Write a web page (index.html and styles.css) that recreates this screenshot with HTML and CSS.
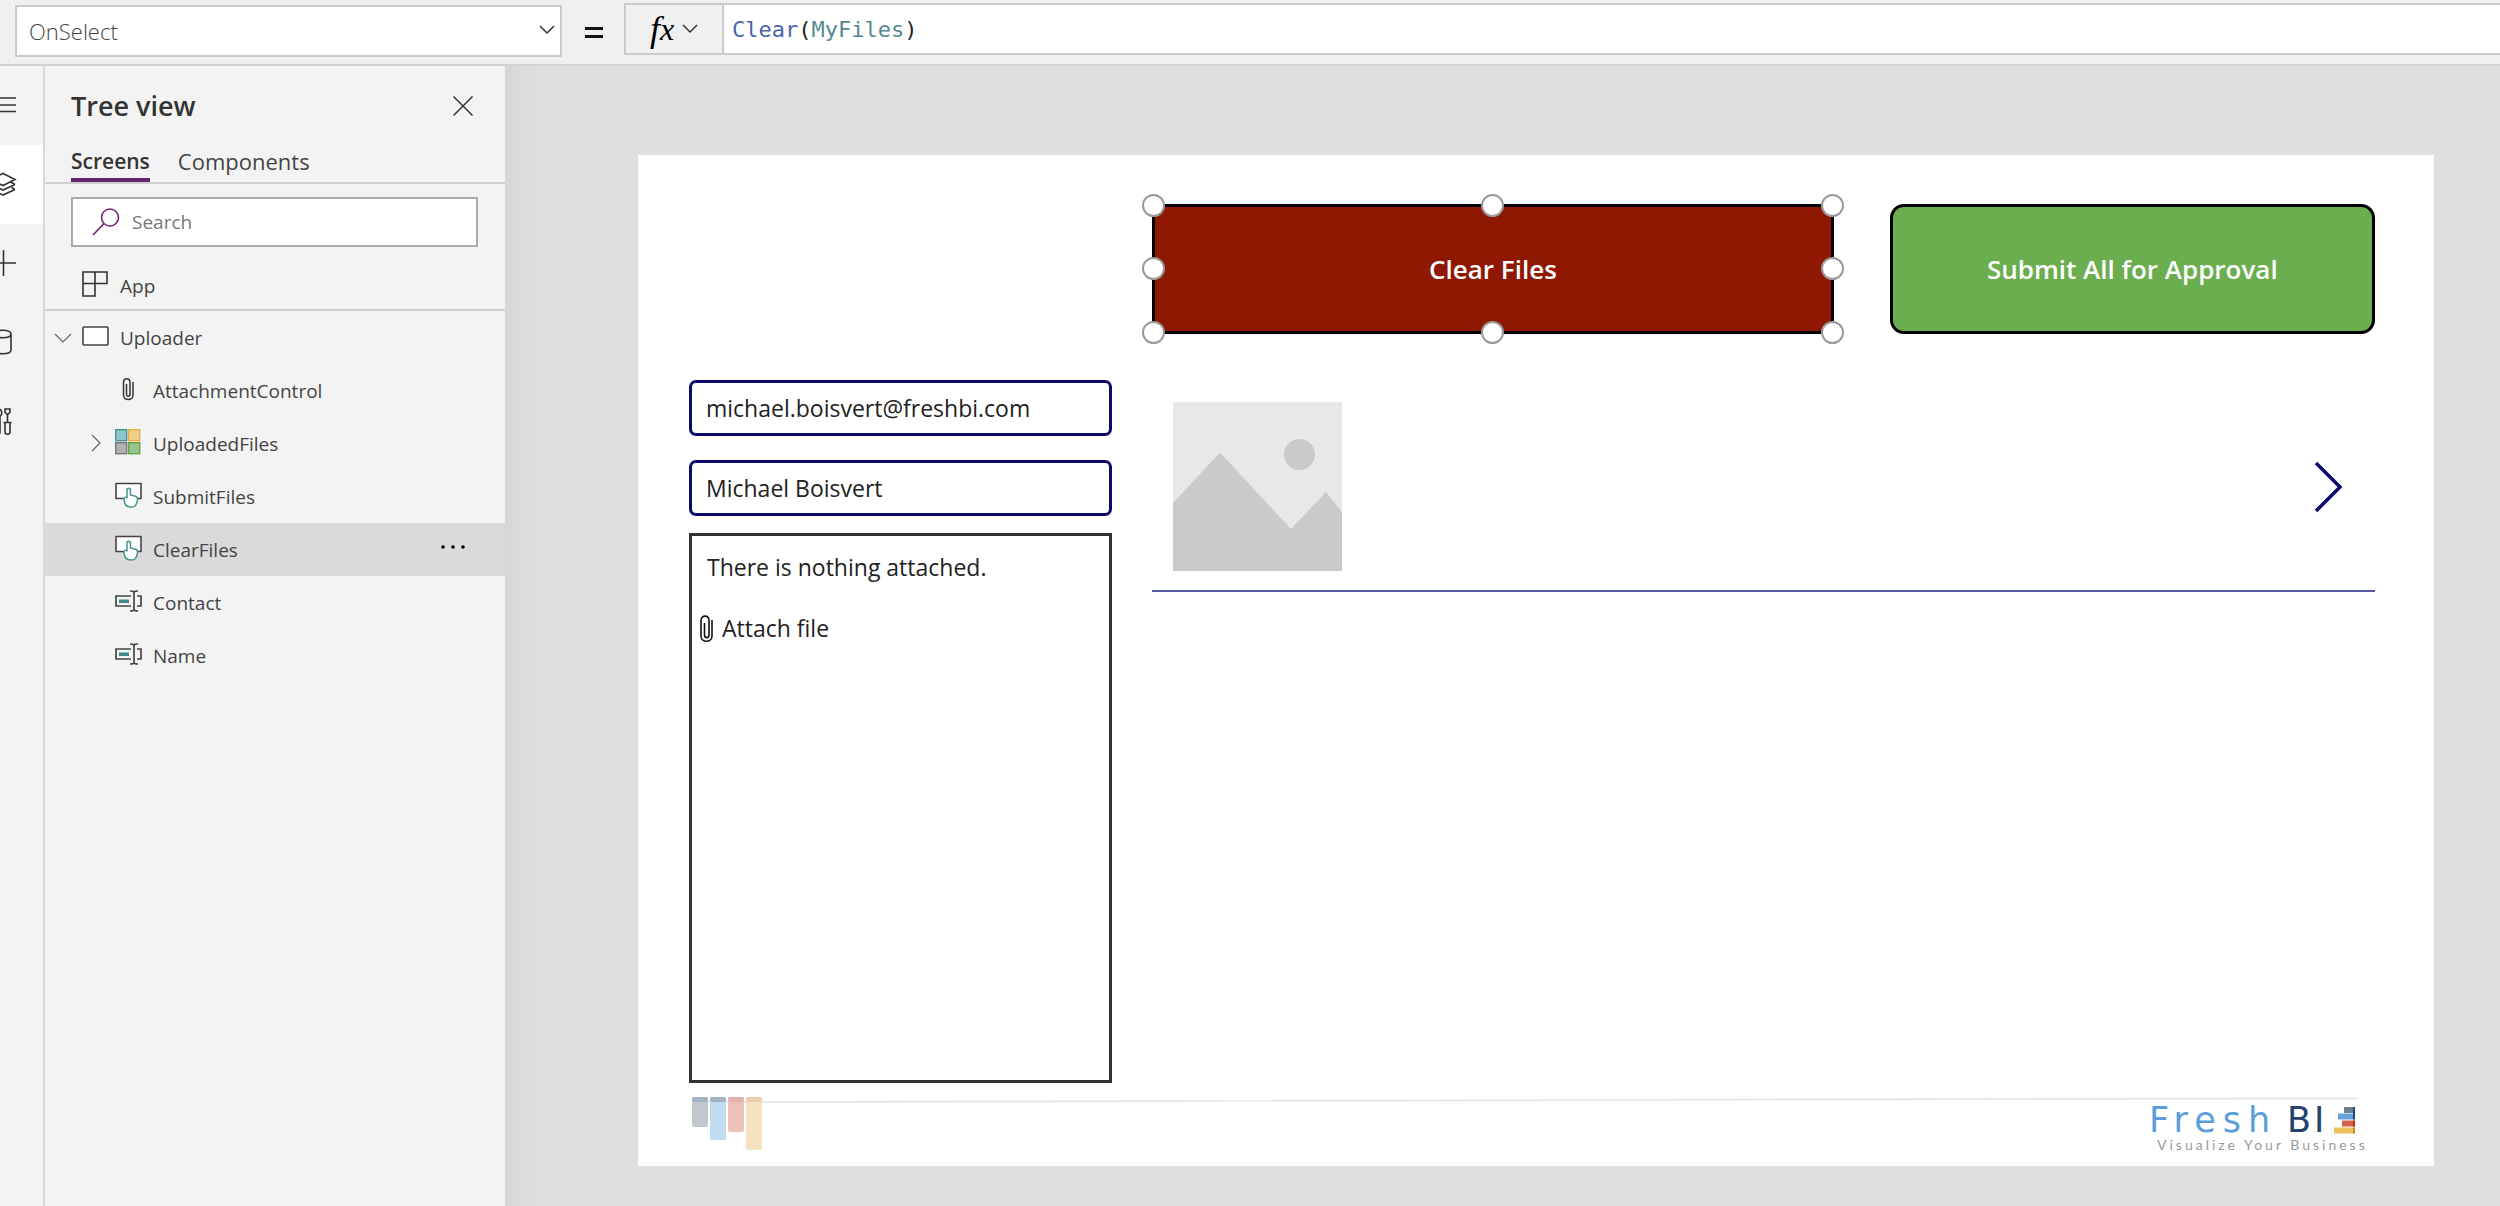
FILE: index.html
```html
<!DOCTYPE html>
<html lang="en">
<head>
<meta charset="utf-8">
<title>Uploader - App editor</title>
<link rel="stylesheet" href="styles.css">
</head>
<body>
<header class="formula-bar">
  <div class="property">
    <select class="property-select" aria-label="Property"><option>OnSelect</option></select>
    <svg class="property-chevron" width="16" height="10" viewBox="0 0 16 10"><path d="M1 1l7 7 7-7" fill="none" stroke="#333" stroke-width="1.5"/></svg>
  </div>
  <span class="equals">
    <svg width="18" height="12" viewBox="0 0 18 12"><path d="M0 1.5h18M0 9.5h18" stroke="#111" stroke-width="3"/></svg>
  </span>
  <div class="formula">
    <button class="fx" type="button" aria-label="Functions"><span class="fx-f">f</span><span class="fx-x">x</span>
      <svg class="fx-chevron" width="16" height="10" viewBox="0 0 16 10"><path d="M1 1l7 7 7-7" fill="none" stroke="#333" stroke-width="1.5"/></svg>
    </button>
    <div class="formula-text" contenteditable="true" role="textbox" aria-label="Formula" spellcheck="false"><span class="fn">Clear</span>(<span class="ident">MyFiles</span>)</div>
  </div>
</header>

<div class="workspace">
  <nav class="rail" aria-label="Panels">
    <button class="rail-item" type="button" aria-label="Menu"><svg width="20" height="32" viewBox="0 0 20 32"><path d="M0 9h16M0 16h16M0 22.500h16" stroke="#333" stroke-width="1.700"/></svg></button>
    <button class="rail-item rail-item-active" type="button" aria-label="Tree view"><svg width="20" height="32" viewBox="0 0 20 32"><path d="M-10 11.500L3 5.500l12 6-12 6zM15 16.500l-12 5.500-12-5.500 3-2M15 16.500l-3.500-2M15 21.500l-12 5.500-12-5.500 3-2M15 21.500l-3.500-2" fill="none" stroke="#333" stroke-width="1.600"/></svg></button>
    <button class="rail-item" type="button" aria-label="Insert"><svg width="20" height="32" viewBox="0 0 20 32"><path d="M0 16h16M3.500 3v26" stroke="#333" stroke-width="1.600"/></svg></button>
    <button class="rail-item" type="button" aria-label="Data"><svg width="20" height="32" viewBox="0 0 20 32"><path d="M-6 8v16c0 5 17 5 17 0V8M-6 8c0 5 17 5 17 0s-17-5-17 0z" fill="none" stroke="#333" stroke-width="1.600"/></svg></button>
    <button class="rail-item" type="button" aria-label="Tools"><svg width="20" height="32" viewBox="0 0 20 32"><g fill="none" stroke="#333" stroke-width="1.600"><path d="M-2 4c4 0 5 5 2 7v17h-3"/><path d="M5 4h5v3l-1.500 2h-2L5 7zM7.500 9v8M3.500 17.500h8M5 18v9c0 3 5 3 5 0v-9"/></g></svg></button>
  </nav>

  <aside class="tree">
    <div class="tree-head">
      <h1 class="tree-title">Tree view</h1>
      <button class="icon-button" type="button" aria-label="Close"><svg width="20" height="20" viewBox="0 0 20 20"><path d="M.5.5l19 19M19.500.5l-19 19" stroke="#333" stroke-width="1.500"/></svg></button>
    </div>
    <div class="tabs" role="tablist">
      <button class="tab tab-active" type="button" role="tab" aria-selected="true">Screens</button>
      <button class="tab" type="button" role="tab" aria-selected="false">Components</button>
    </div>
    <label class="search">
      <svg width="28" height="28" viewBox="0 0 28 28"><circle cx="18" cy="9.500" r="8.500" fill="none" stroke="#742774" stroke-width="1.600"/><path d="M12 15.500L1 27" stroke="#742774" stroke-width="1.800"/></svg>
      <input class="search-input" type="search" placeholder="Search" aria-label="Search">
    </label>
    <ul class="items">
      <li class="item item-top item-app">
        <span class="item-icon"><svg width="26" height="26" viewBox="0 0 26 26"><path d="M1 1h24v11.500H13V25H1zM13 1v11.500M1 12.500h12" fill="none" stroke="#333" stroke-width="1.600"/></svg></span>App
      </li>
      <li class="item item-top">
        <svg class="twisty" width="18" height="10" viewBox="0 0 18 10"><path d="M1 1l8 8 8-8" fill="none" stroke="#666" stroke-width="1.200"/></svg>
        <span class="item-icon"><svg width="27" height="20" viewBox="0 0 27 20"><rect x="1" y="1" width="25" height="18" rx="1" fill="#fff" stroke="#444" stroke-width="1.600"/></svg></span>Uploader
      </li>
      <li class="item">
        <span class="item-icon"><svg width="26" height="24" viewBox="0 0 26 24"><path d="M18 5v13c0 6-9.500 6-9.500 0V5.500c0-5 6.500-5 6.500 0V17c0 3-3.500 3-3.500 0V7" fill="none" stroke="#333" stroke-width="1.500"/></svg></span>AttachmentControl
      </li>
      <li class="item">
        <svg class="twisty" width="10" height="18" viewBox="0 0 10 18"><path d="M1 1l8 8-8 8" fill="none" stroke="#666" stroke-width="1.200"/></svg>
        <span class="item-icon"><svg width="26" height="26" viewBox="0 0 26 26"><g stroke-width="1.400"><rect x=".7" y=".7" width="11" height="11" fill="#8bc8cb" stroke="#4f8f92"/><rect x="13.700" y=".7" width="11" height="11" fill="#efcf8a" stroke="#e8b04a"/><rect x=".7" y="13.700" width="11" height="11" fill="#b1b1b1" stroke="#777"/><rect x="13.700" y="13.700" width="11" height="11" fill="#9ac48b" stroke="#64a24b"/></g></svg></span>UploadedFiles
      </li>
      <li class="item">
        <span class="item-icon"><svg width="27" height="26" viewBox="0 0 27 26"><use href="#tap"/></svg></span>SubmitFiles
      </li>
      <li class="item item-selected">
        <span class="item-icon"><svg width="27" height="26" viewBox="0 0 27 26"><use href="#tap"/></svg></span>ClearFiles
        <button class="icon-button more" type="button" aria-label="More"><svg width="24" height="4" viewBox="0 0 24 4"><circle cx="2" cy="2" r="1.800"/><circle cx="12" cy="2" r="1.800"/><circle cx="22" cy="2" r="1.800"/></svg></button>
      </li>
      <li class="item">
        <span class="item-icon"><svg width="27" height="22" viewBox="0 0 27 22"><use href="#field"/></svg></span>Contact
      </li>
      <li class="item">
        <span class="item-icon"><svg width="27" height="22" viewBox="0 0 27 22"><use href="#field"/></svg></span>Name
      </li>
    </ul>
  </aside>

  <main class="stage">
    <div class="screen">
      <div class="actions">
        <div class="selection">
          <button class="action action-clear" type="button">Clear Files</button>
          <i class="handle h-top h-left"></i><i class="handle h-top h-center"></i><i class="handle h-top h-right"></i>
          <i class="handle h-middle h-left"></i><i class="handle h-middle h-right"></i>
          <i class="handle h-bottom h-left"></i><i class="handle h-bottom h-center"></i><i class="handle h-bottom h-right"></i>
        </div>
        <button class="action action-submit" type="button">Submit All for Approval</button>
      </div>
      <form class="details">
        <input class="field" type="text" aria-label="Contact" value="michael.boisvert@freshbi.com">
        <input class="field" type="text" aria-label="Name" value="Michael Boisvert">
        <div class="attachments">
          <p class="attachments-empty">There is nothing attached.</p>
          <button class="attach" type="button"><svg width="13" height="28" viewBox="0 0 13 28"><path d="M12 5v16c0 7-11 7-11 0V6c0-6.500 8-6.500 8 0v14c0 3.500-4.500 3.500-4.500 0V8" fill="none" stroke="#111" stroke-width="1.600"/></svg>Attach file</button>
        </div>
      </form>
      <section class="gallery">
        <svg width="169" height="169" viewBox="0 0 169 169" role="img" aria-label="File preview"><rect width="169" height="169" fill="#e8e8e8"/><path d="M0 101L47 50.500l71 76.500 35-37 16 20v59H0z" fill="#cacac8"/><circle cx="126.500" cy="52.500" r="15.500" fill="#cacac8"/></svg>
        <button class="icon-button" type="button" aria-label="Open file"><svg width="28" height="54" viewBox="0 0 28 54"><path d="M2 3l24 24L2 51" fill="none" stroke="#0b0b6b" stroke-width="3.500"/></svg></button>
      </section>
      <footer class="brand">
        <svg class="brand-line" viewBox="0 0 1664 6" preserveAspectRatio="none"><path d="M0 5L300 4.500 1300 2 1664 1.500" fill="none" stroke="#e3e3e3" stroke-width="1.500"/></svg>
        <svg class="brand-bars" width="72" height="54" viewBox="0 0 72 54"><rect x="0" y="0" width="16" height="30" rx="2" fill="#c0c7cf"/><rect x="18" y="0" width="16" height="43" rx="2" fill="#c1dcf0"/><rect x="36" y="0" width="16" height="35" rx="2" fill="#ecc2bb"/><rect x="54" y="0" width="16" height="53" rx="2" fill="#f6e2c0"/><rect x="0" y="0" width="16" height="5" rx="2" fill="#a3b2c5"/><rect x="18" y="0" width="16" height="5" rx="2" fill="#a5b1c4"/><rect x="36" y="0" width="16" height="5" rx="2" fill="#e1b3ab"/><rect x="54" y="0" width="16" height="5" rx="2" fill="#e9cdb0"/></svg>
        <div class="logo">
          <div class="logo-name"><span class="logo-fresh">Fresh</span><span class="logo-bi">BI</span>
            <svg width="22" height="28" viewBox="0 0 22 28"><path fill="#6f7f8c" d="M10 1h11v6H10z"/><path fill="#66a3de" d="M4 7.500h17v6H4z"/><path fill="#d5614c" d="M8 14.500h13v6H8z"/><path fill="#efbf5c" d="M0 21.500h21v6H0z"/><path fill="#24426b" d="M19 1h2v12.500h-2z"/><path fill="#b8331f" d="M19 14.500h2v6h-2z"/><path fill="#d18a2c" d="M19 21.500h2v6h-2z"/></svg>
          </div>
          <div class="logo-tagline">Visualize Your Business</div>
        </div>
      </footer>
    </div>
  </main>
</div>

<svg class="symbols" aria-hidden="true">
  <symbol id="tap" viewBox="0 0 27 26"><path d="M1 1.500h25v15H1z" fill="#fff" stroke="#444" stroke-width="1.600" stroke-linejoin="round"/><path d="M12 16.500V8c0-2.500 3.500-2.500 3.500 0v5l5 1.200c2 .5 2.200 1.300 2 3.300-.3 4.500-2.500 7.500-6.500 7.500-5 0-7-3.500-7-8 0-2 1.500-2 3-1" fill="#fff" stroke="#4a9490" stroke-width="1.500"/></symbol>
  <symbol id="field" viewBox="0 0 27 22"><path d="M16 6H1v10h15M22 6h4v10h-4" fill="none" stroke="#444" stroke-width="1.700"/><path d="M4 9.500h10v3.500H4z" fill="#3f8c87"/><path d="M19 2v18M15 1c2.500 0 4 .4 4 1.500C19 1.400 20.500 1 23 1M15 21c2.500 0 4-.4 4-1.500 0 1.100 1.500 1.500 4 1.500" fill="none" stroke="#444" stroke-width="1.700"/></symbol>
</svg>
</body>
</html>
```
FILE: styles.css
```css
* { box-sizing: border-box; }

body {
  margin: 0;
  min-height: 100vh;
  display: flex;
  flex-direction: column;
  background: #dfdfdf;
  color: #444;
  font-family: "Open Sans", "Noto Sans", sans-serif;
  font-size: 19px;
}

button, input, select { font: inherit; color: inherit; }
button { margin: 0; padding: 0; border: 0; background: none; }
svg { display: block; flex: none; }
.symbols { position: absolute; width: 0; height: 0; }
.icon-button { display: flex; }

/* Formula bar */
.formula-bar {
  display: flex;
  align-items: flex-start;
  height: 66px;
  padding: 3px 0 0 15px;
  background: #f0f0f0;
  border-bottom: 2px solid #d2d2d2;
}
.property { position: relative; width: 547px; padding-top: 2px; }
.property-select {
  display: block;
  width: 100%;
  height: 52px;
  padding: 0 12px;
  appearance: none;
  border: 2px solid #cbcbcb;
  border-radius: 0;
  background: #fff;
  color: #444;
  font-size: 22px;
  font-weight: 300;
}
.property-chevron { position: absolute; right: 7px; top: 22px; pointer-events: none; }
.equals { width: 62px; padding: 24px 0 0 23px; }
.formula {
  flex: 1;
  display: flex;
  height: 52px;
  border: 2px solid #cbcbcb;
  border-right: 0;
}
.fx {
  display: flex;
  align-items: center;
  width: 98px;
  padding-left: 24px;
  border-right: 2px solid #cbcbcb;
  color: #000;
  font-family: "Liberation Serif", serif;
  font-style: italic;
  line-height: 40px;
}
.fx-f { font-size: 36px; }
.fx-x { font-size: 32px; }
.fx-chevron { margin-left: 8px; }
.formula-text {
  flex: 1;
  padding-left: 8px;
  background: #fff;
  color: #222;
  font-family: "DejaVu Sans Mono", monospace;
  font-size: 22px;
  line-height: 50px;
}
.fn { color: #4a64ad; }
.ident { color: #528a91; }

.workspace { flex: 1; display: flex; }

/* Icon rail */
.rail {
  width: 45px;
  background: #f3f3f3;
  border-right: 2px solid #d8d8d8;
}
.rail-item { display: flex; align-items: center; width: 100%; height: 79px; padding-bottom: 2px; }
.rail-item-active { background: #fff; }

/* Tree view */
.tree { width: 460px; background: #f3f3f3; }
.tree-head {
  display: flex;
  justify-content: space-between;
  align-items: center;
  height: 78px;
  padding: 2px 32px 0 26px;
}
.tree-title { margin: 0; font-size: 27px; line-height: 40px; font-weight: 600; color: #333; }
.tabs {
  display: flex;
  gap: 28px;
  height: 40px;
  padding-left: 26px;
  border-bottom: 2px solid #d2d2d2;
}
.tab { display: flex; height: 38px; font-size: 22px; line-height: 34px; }
.tab-active { border-bottom: 4px solid #66266b; font-size: 21px; font-weight: 600; color: #333; }
.search {
  display: flex;
  align-items: center;
  gap: 12px;
  height: 50px;
  margin: 13px 27px 0 26px;
  padding-left: 19px;
  background: #fff;
  border: 2px solid #a9aaaa;
}
.search-input { flex: 1; min-width: 0; padding: 0; border: 0; outline: 0; background: none; }
.search-input::placeholder { color: #777; opacity: 1; }
.items { margin: 0; padding: 11px 0 0; list-style: none; }
.item {
  position: relative;
  display: flex;
  align-items: center;
  gap: 11px;
  height: 53px;
  padding: 1px 40px 0 70px;
}
.item-top { padding-left: 37px; }
.item-app { padding-top: 5px; border-bottom: 2px solid #cfcfcf; }
.item-icon { width: 27px; padding-bottom: 4px; }
.item-selected { background: #dadada; }
.twisty { position: absolute; left: 9px; top: 22px; }
.item:not(.item-top) .twisty { left: 46px; top: 17px; }
.more { margin-left: auto; padding-bottom: 6px; }

/* Stage */
.stage {
  flex: 1;
  min-width: 0;
  padding: 89px 66px 40px 133px;
  background: linear-gradient(to right, #d6d6d6, #dfdfdf 32px);
}
.screen {
  display: grid;
  grid-template-columns: minmax(0, 423fr) minmax(0, 1222fr);
  grid-template-rows: 130px auto 83px;
  column-gap: 40px;
  padding: 49px 59px 0 51px;
  background: #fff;
}
.actions {
  grid-column: 2;
  display: grid;
  grid-template-columns: 681fr 485fr;
  gap: 56px;
}
.selection { position: relative; display: flex; }
.action { border: 3px solid #000; color: #fff; font-size: 26px; font-weight: 600; }
.action-clear { flex: 1; background: #8f1802; }
.action-submit { border-radius: 14px; background: #6bae4f; }
.handle {
  position: absolute;
  width: 23px;
  height: 23px;
  border: 2px solid #999;
  border-radius: 50%;
  background: #fff;
}
.h-top { top: -10px; }
.h-middle { top: calc(50% - 12px); }
.h-bottom { bottom: -10px; }
.h-left { left: -10px; }
.h-center { left: calc(50% - 12px); }
.h-right { right: -10px; }

.details { grid-column: 1; display: flex; flex-direction: column; padding-top: 46px; color: #222; }
.field {
  height: 56px;
  margin-bottom: 24px;
  padding: 0 14px;
  border: 3px solid #0b0b6b;
  border-radius: 7px;
  background: #fff;
  font-size: 23px;
}
.field + .field { margin-bottom: 17px; }
.attachments { min-height: 550px; padding: 15px 8px; border: 3px solid #333; font-size: 23px; }
.attachments-empty { margin: 0 0 28px 7px; line-height: 33px; }
.attach { display: flex; align-items: center; gap: 9px; line-height: 33px; }

.gallery {
  align-self: start;
  display: flex;
  justify-content: space-between;
  align-items: center;
  margin-top: 46px;
  padding: 22px 33px 19px 21px;
  border-bottom: 2px solid #5558a0;
}

.brand {
  grid-column: 1 / -1;
  position: relative;
  display: flex;
  justify-content: space-between;
  padding: 14px 9px 0 3px;
}
.brand-line { position: absolute; left: 3px; top: 14px; width: calc(100% - 20px); height: 6px; }
.brand-bars { position: relative; }
.logo { width: 217px; padding-top: 8px; }
.logo-name { display: flex; align-items: center; height: 30px; font-family: "DejaVu Sans", sans-serif; font-size: 35px; line-height: 30px; }
.logo-fresh { width: 138px; color: #5a9edc; letter-spacing: 7px; }
.logo-bi { width: 47px; color: #24426b; letter-spacing: 3px; }
.logo-tagline { padding-left: 8px; font-family: Lato, sans-serif; font-size: 14px; line-height: 20px; letter-spacing: 3px; color: #999; white-space: nowrap; }
```
